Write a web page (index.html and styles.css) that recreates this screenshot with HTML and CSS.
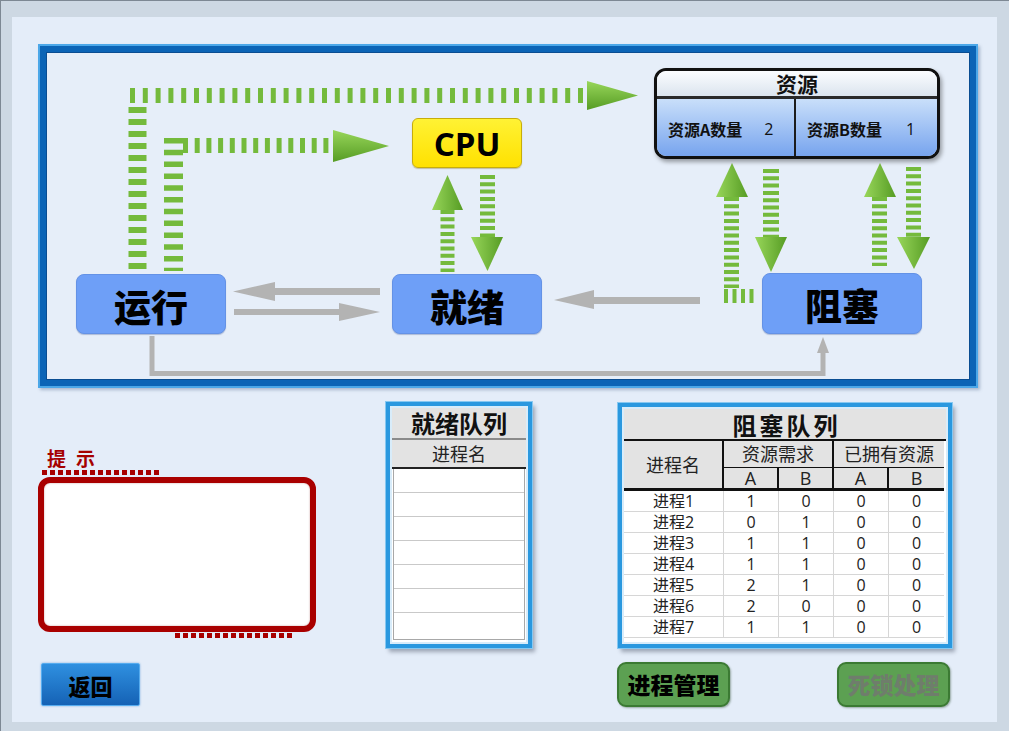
FILE: index.html
```html
<!DOCTYPE html>
<html lang="zh-CN">
<head>
<meta charset="utf-8">
<title>进程管理</title>
<link rel="stylesheet" href="styles.css">
</head>
<body>
<div class="window">
  <div class="panel">
    <div class="diagram">
      <svg class="flows" viewBox="46 52 924 328" width="924" height="328">
        <defs>
          <linearGradient id="gh" x1="0" y1="0" x2="0" y2="1">
            <stop offset="0" stop-color="#98d65a"/>
            <stop offset="1" stop-color="#569c24"/>
          </linearGradient>
          <linearGradient id="gv" x1="0" y1="0" x2="1" y2="0">
            <stop offset="0" stop-color="#98d65a"/>
            <stop offset="1" stop-color="#569c24"/>
          </linearGradient>
        </defs>
        <g class="dash">
          <line x1="130" y1="95.5" x2="587" y2="95.5" stroke-width="15" stroke-dasharray="5 7.8"/>
          <line x1="137.5" y1="107" x2="137.5" y2="271" stroke-width="18" stroke-dasharray="6 6"/>
          <line x1="183" y1="145.5" x2="333" y2="145.5" stroke-width="15" stroke-dasharray="5 6.7"/>
          <line x1="173.5" y1="138" x2="173.5" y2="271" stroke-width="19" stroke-dasharray="5.5 6.3"/>
          <line x1="447.5" y1="210" x2="447.5" y2="272" stroke-width="14" stroke-dasharray="4 3.3"/>
          <line x1="487.5" y1="175" x2="487.5" y2="237" stroke-width="15" stroke-dasharray="4 3.3"/>
          <line x1="731.5" y1="197" x2="731.5" y2="288" stroke-width="15" stroke-dasharray="4 3.3"/>
          <line x1="724" y1="296" x2="758" y2="296" stroke-width="14" stroke-dasharray="4 4.5"/>
          <line x1="771" y1="169" x2="771" y2="237" stroke-width="16" stroke-dasharray="4 3.3"/>
          <line x1="879.5" y1="197" x2="879.5" y2="266" stroke-width="15" stroke-dasharray="4 3.3"/>
          <line x1="913.5" y1="167" x2="913.5" y2="237" stroke-width="15" stroke-dasharray="4 3.3"/>
        </g>
        <polygon points="587,81 638,95.5 587,110" fill="url(#gh)"/>
        <polygon points="333,130 389,146 333,162" fill="url(#gh)"/>
        <g fill="url(#gv)">
          <polygon points="432,210 447.5,175 463,210"/>
          <polygon points="471,237 503,237 487.5,271"/>
          <polygon points="716,197 732,163 748,197"/>
          <polygon points="755,237 787,237 771,272"/>
          <polygon points="864,197 880,163 896,197"/>
          <polygon points="897,237 930,237 914,269"/>
        </g>
        <g class="gray">
          <rect x="273" y="288" width="107" height="7"/>
          <polygon points="275,282 233,291.5 275,301"/>
          <rect x="234" y="309" width="106" height="6"/>
          <polygon points="339,303 380,312 339,321"/>
          <rect x="594" y="297" width="106" height="7"/>
          <polygon points="594,290 554,300 594,309"/>
          <polyline points="152,336 152,373.5 823,373.5 823,352" fill="none" stroke="#b3b3b3" stroke-width="5"/>
          <polygon points="817,353 823,337 829,353"/>
        </g>
      </svg>

      <div class="cpu">CPU</div>

      <div class="resource">
        <div class="res-head">资源</div>
        <div class="res-body">
          <div class="res-cell res-a"><span class="res-label">资源A数量</span><span class="res-num">2</span></div>
          <div class="res-cell res-b"><span class="res-label">资源B数量</span><span class="res-num">1</span></div>
        </div>
      </div>

      <div class="state st-run">运行</div>
      <div class="state st-ready">就绪</div>
      <div class="state st-block">阻塞</div>
    </div>

    <div class="lower">
      <div class="hint">
        <div class="hint-label">提示</div>
        <div class="dots"></div>
        <div class="hint-box"></div>
        <div class="dots dots-bottom"></div>
      </div>

      <div class="queue ready-q">
        <div class="q-inner">
          <div class="q-title">就绪队列</div>
          <div class="q-head">进程名</div>
          <div class="q-list">
            <div class="q-row"></div>
            <div class="q-row"></div>
            <div class="q-row"></div>
            <div class="q-row"></div>
            <div class="q-row"></div>
            <div class="q-row"></div>
            <div class="q-row"></div>
          </div>
        </div>
      </div>

      <div class="queue block-q">
        <div class="q-inner">
          <div class="q-title q-title-wide">阻塞队列</div>
          <table class="btable">
            <colgroup>
              <col class="c-name"><col class="c-num"><col class="c-num"><col class="c-num"><col class="c-num">
            </colgroup>
            <thead>
              <tr class="h1">
                <th rowspan="2" class="h-name">进程名</th>
                <th colspan="2" class="h-group">资源需求</th>
                <th colspan="2" class="h-group last">已拥有资源</th>
              </tr>
              <tr class="h2">
                <th>A</th><th>B</th><th>A</th><th class="last">B</th>
              </tr>
            </thead>
            <tbody>
              <tr><td>进程1</td><td>1</td><td>0</td><td>0</td><td>0</td></tr>
              <tr><td>进程2</td><td>0</td><td>1</td><td>0</td><td>0</td></tr>
              <tr><td>进程3</td><td>1</td><td>1</td><td>0</td><td>0</td></tr>
              <tr><td>进程4</td><td>1</td><td>1</td><td>0</td><td>0</td></tr>
              <tr><td>进程5</td><td>2</td><td>1</td><td>0</td><td>0</td></tr>
              <tr><td>进程6</td><td>2</td><td>0</td><td>0</td><td>0</td></tr>
              <tr><td>进程7</td><td>1</td><td>1</td><td>0</td><td>0</td></tr>
            </tbody>
          </table>
        </div>
      </div>

      <div class="back-cell">
        <button class="btn-back" type="button">返回</button>
      </div>
      <div class="spacer"></div>
      <div class="actions">
        <button class="btn-green" type="button">进程管理</button>
        <button class="btn-green disabled" type="button">死锁处理</button>
      </div>
    </div>
  </div>
</div>
</body>
</html>
```

FILE: styles.css
```css
* { box-sizing: border-box; }

html, body {
  margin: 0;
  padding: 0;
}

body {
  font-family: "Open Sans", "Noto Sans CJK SC", sans-serif;
  background: #cdd8e3;
}

.window {
  width: 1009px;
  height: 731px;
  padding: 16px 12px 9px 11px;
  background: #cdd8e3;
  border-top: 1px solid #7d8893;
  border-left: 1px solid #7d8893;
}

.panel {
  width: 985px;
  height: 705px;
  background: #e4edf9;
  overflow: hidden;
}

/* ---------- diagram ---------- */
.diagram {
  position: relative;
  margin: 29px 0 0 28px;
  width: 936px;
  height: 340px;
  border: 6px solid #0b64b6;
  box-shadow: 0 0 0 2px #4ba7e8, inset 0 0 0 1px #0a4d92, 2px 2px 3px 2px rgba(60, 90, 130, 0.35);
  background: #e6eef9;
}

.flows {
  position: absolute;
  left: 0;
  top: 0;
  display: block;
}

.dash line { stroke: #74ba3c; }
.gray { fill: #b3b3b3; }

.cpu {
  position: absolute;
  left: 366px;
  top: 66px;
  width: 110px;
  height: 50px;
  background: linear-gradient(#fff234, #ffe100);
  border: 1px solid #c7ad0a;
  border-radius: 6px;
  box-shadow: 0 1px 1px rgba(120, 100, 0, 0.35);
  display: flex;
  align-items: center;
  justify-content: center;
  font: 700 33px/1 "Open Sans", sans-serif;
  color: #000;
}

.resource {
  position: absolute;
  left: 608px;
  top: 16px;
  width: 286px;
  height: 91px;
  border: 3px solid #111;
  border-radius: 12px;
  overflow: hidden;
  box-shadow: 2px 3px 4px rgba(0, 0, 0, 0.35);
  display: flex;
  flex-direction: column;
}

.res-head {
  height: 28px;
  background: linear-gradient(#fbfdff, #dbe4ee);
  border-bottom: 3px solid #2a2a2a;
  box-shadow: 0 1px 0 #8c96a2;
  font: 700 21px/25px "Noto Sans CJK SC", sans-serif;
  text-align: center;
  color: #111;
}

.res-body {
  flex: 1;
  display: flex;
  background: linear-gradient(#c9dffa, #77a4ee);
}

.res-cell {
  display: flex;
  align-items: center;
  padding-top: 2px;
}

.res-a {
  width: 139px;
  padding-left: 11px;
  border-right: 2px solid #1c1c1c;
}

.res-b {
  flex: 1;
  padding-left: 11px;
}

.res-label {
  font: 700 16px/1 "Noto Sans CJK SC", sans-serif;
  color: #111;
}

.res-a .res-num { margin-left: 22px; }
.res-b .res-num { margin-left: 24px; }

.res-num {
  font: 400 16px/1 "Open Sans", sans-serif;
  color: #111;
}

.state {
  position: absolute;
  width: 150px;
  height: 60px;
  background: #6e9ff7;
  border: 1px solid #6492e6;
  border-radius: 8px;
  box-shadow: 0 1px 1px rgba(40, 70, 140, 0.3);
  display: flex;
  align-items: center;
  justify-content: center;
  padding-top: 4px;
  font: 900 37px/1 "Noto Sans CJK SC", sans-serif;
  color: #000;
}

.st-run { left: 30px; top: 222px; }
.st-ready { left: 346px; top: 222px; }
.st-block { left: 716px; top: 221px; width: 160px; height: 61px; }

/* ---------- lower area ---------- */
.lower {
  display: grid;
  grid-template-columns: 348px 232px 334px;
  grid-template-rows: 247px 45px;
  row-gap: 14px;
  margin: 15px 0 0 26px;
}

.hint {
  padding-top: 46px;
}

.hint-label {
  height: 22px;
  margin-left: 9px;
  font: 700 19px/22px "Noto Sans CJK SC", sans-serif;
  letter-spacing: 10px;
  color: #a50000;
}

.dots {
  width: 118px;
  height: 5px;
  margin: 1px 0 0 4px;
  background: repeating-linear-gradient(to right, #a80000 0 5px, transparent 5px 8px);
}

.dots-bottom {
  margin: 1px 0 0 137px;
}

.hint-box {
  width: 278px;
  height: 155px;
  margin-top: 2px;
  background: #fff;
  border: 6px solid #a90000;
  border-radius: 12px;
  box-shadow: inset 0 0 2px rgba(120, 0, 0, 0.4);
}

.queue {
  background: #d8ecfa;
  border: 4px solid #2a98df;
  padding: 2px;
  box-shadow: 0 0 0 1px #86c8f1, 3px 4px 4px rgba(70, 80, 100, 0.45);
}

.ready-q {
  width: 146px;
  height: 246px;
  margin-top: 1px;
}

.block-q {
  width: 334px;
  height: 245px;
  margin-top: 2px;
}

.q-inner {
  height: 100%;
  background: #fff;
  display: flex;
  flex-direction: column;
}

.q-title {
  height: 32px;
  background: #e3e3e3;
  border-bottom: 2px solid #8a8a8a;
  font: 700 24px/30px "Noto Sans CJK SC", sans-serif;
  text-align: center;
  color: #111;
}

.q-title-wide {
  border-bottom-color: #111;
  letter-spacing: 3px;
  padding-left: 3px;
  line-height: 32px;
}

.q-head {
  height: 29px;
  background: #e3e3e3;
  border-bottom: 2px solid #222;
  font: 400 18px/27px "Noto Sans CJK SC", sans-serif;
  text-align: center;
  color: #222;
}

.q-list {
  flex: 1;
  margin: 0 1px 2px;
  border: 1px solid #a8a8a8;
  border-top: none;
}

.q-row {
  height: 24px;
  border-bottom: 1px solid #c9c9c9;
}

.q-row:last-child { border-bottom: none; }

/* blocked table */
.btable {
  width: 319px;
  table-layout: fixed;
  border-collapse: separate;
  border-spacing: 0;
  font-family: "Open Sans", "Noto Sans CJK SC", sans-serif;
  color: #222;
}

.c-name { width: 100px; }
.c-num { width: 55px; }

.btable th {
  background: #e3e3e3;
  font-weight: 400;
  font-size: 18px;
  padding: 0;
  text-align: center;
}

.btable .h1 th {
  height: 27px;
  line-height: 24px;
  border-bottom: 1px solid #111;
  border-right: 2px solid #111;
}

.btable .h1 th.last { border-right: none; }

.btable th.h-name {
  border-bottom: 3px solid #111;
  line-height: 44px;
}

.btable .h2 th {
  height: 23px;
  line-height: 20px;
  border-bottom: 3px solid #111;
  border-right: 2px solid #111;
}

.btable .h2 th.last { border-right: none; }

.btable td {
  height: 21px;
  padding: 0;
  text-align: center;
  font-size: 16px;
  line-height: 20px;
  border-bottom: 1px solid #d6d6d6;
  border-right: 1px solid #d6d6d6;
}

.btable td:last-child { border-right: none; }

/* buttons */
.back-cell {
  padding: 1px 0 0 3px;
}

.btn-back {
  width: 99px;
  height: 43px;
  margin: 0;
  padding: 0;
  background: linear-gradient(#2f90e0, #1562b5);
  border: 1px solid #56acef;
  border-radius: 2px;
  box-shadow: 0 0 2px rgba(40, 120, 200, 0.6);
  font: 900 22px/1 "Noto Sans CJK SC", sans-serif;
  color: #000;
}

.actions {
  display: flex;
  justify-content: space-between;
  margin: 0 2px 0 -1px;
}

.btn-green {
  width: 113px;
  height: 45px;
  margin: 0;
  padding: 0;
  background: #5ca052;
  border: 2px solid #3b7a33;
  border-radius: 9px;
  box-shadow: 1px 1px 2px rgba(40, 70, 40, 0.4);
  font: 900 23px/1 "Noto Sans CJK SC", sans-serif;
  color: #000;
}

.btn-green.disabled {
  color: #6f7d6c;
}
```
